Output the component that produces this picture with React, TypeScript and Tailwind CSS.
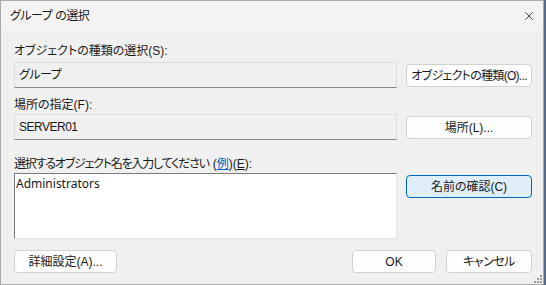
import { X } from "lucide-react";

const jp = "font-['Liberation_Sans','Noto_Sans_CJK_JP',sans-serif] [font-feature-settings:'palt']";

function Btn({ children, primary = false, className = "" }: { children: React.ReactNode; primary?: boolean; className?: string }) {
  return (
    <div
      role="button"
      className={
        "flex h-[23px] items-center justify-center whitespace-nowrap rounded-[4px] border text-[12px] leading-none text-[#1a1a1a] " +
        (primary ? "border-[#0067c0] bg-[#e0eef9] " : "border-[#d1d1d1] bg-[#fdfdfd] ") +
        className
      }
    >
      {children}
    </div>
  );
}

function Field({ value }: { value: string }) {
  return (
    <div className="flex h-[26px] w-[383px] items-center border border-[#dedede] border-b-[#8a8a8a] bg-[#f0f0f0] pl-[4px] text-[12px] tracking-[-0.5px]">
      {value}
    </div>
  );
}

export default function App() {
  return (
    <div className={"h-[285px] w-[546px] bg-[#5a6b8a] " + jp}>
      <div className="flex h-[285px] w-[544px] flex-col border border-[#a9a9a9] bg-[#f0f0f0] text-[#1a1a1a]">
        {/* title bar */}
        <div className="flex h-[30px] items-center justify-between bg-[#f3f3f3] pl-[9px] pr-[7px]">
          <span className="text-[12px] tracking-[-0.5px]">グループ の選択</span>
          <X size={14} strokeWidth={1.2} className="text-black" />
        </div>

        <div className="flex flex-col pl-[13px]">
          <div className="mt-[12px] h-[16px] text-[12px] leading-[16px]">オブジェクトの種類の選択(S):</div>
          <div className="mt-[3px] flex items-start gap-[9px]">
            <Field value="グループ" />
            <Btn className="mt-[2px] w-[126px] tracking-[-0.7px]">オブジェクトの種類(O)...</Btn>
          </div>

          <div className="mt-[9px] h-[16px] text-[12px] leading-[16px]">場所の指定(F):</div>
          <div className="mt-[1px] flex items-start gap-[9px]">
            <Field value="SERVER01" />
            <Btn className="mt-[2px] w-[126px]">場所(L)...</Btn>
          </div>

          <div className="mt-[16px] h-[16px] text-[12px] leading-[16px]">
            <span className="tracking-[-1.2px]">選択するオブジェクト名を入力してください</span>
            <span className="ml-[4px]">
              (<span className="text-[#0066cc] underline">例</span>)(<span className="underline">E</span>):
            </span>
          </div>
          <div className="mt-[1px] flex items-start gap-[9px]">
            <div className="h-[66px] w-[383px] border border-[#7a7a7a] border-b-[#e3e3e3] border-r-[#e3e3e3] bg-white px-[1px] pt-[2px] font-['Noto_Sans',sans-serif] text-[12px] leading-[16px]">
              Administrators
            </div>
            <Btn primary className="mt-[2px] w-[126px]">名前の確認(C)</Btn>
          </div>

          <div className="mt-[11px] flex items-center">
            <Btn className="w-[103px]">詳細設定(A)...</Btn>
            <Btn className="ml-[235px] w-[84px]">OK</Btn>
            <Btn className="ml-[10px] w-[86px] tracking-[-0.5px]">キャンセル</Btn>
          </div>
        </div>

        <div className="mt-auto flex justify-end pb-[1px] pr-[1px]">
          <svg width="9" height="9" viewBox="0 0 9 9" fill="#9a9a9a">
            <rect x="7" y="1" width="2" height="2" />
            <rect x="4" y="4" width="2" height="2" />
            <rect x="7" y="4" width="2" height="2" />
            <rect x="1" y="7" width="2" height="2" />
            <rect x="4" y="7" width="2" height="2" />
            <rect x="7" y="7" width="2" height="2" />
          </svg>
        </div>
      </div>
    </div>
  );
}
